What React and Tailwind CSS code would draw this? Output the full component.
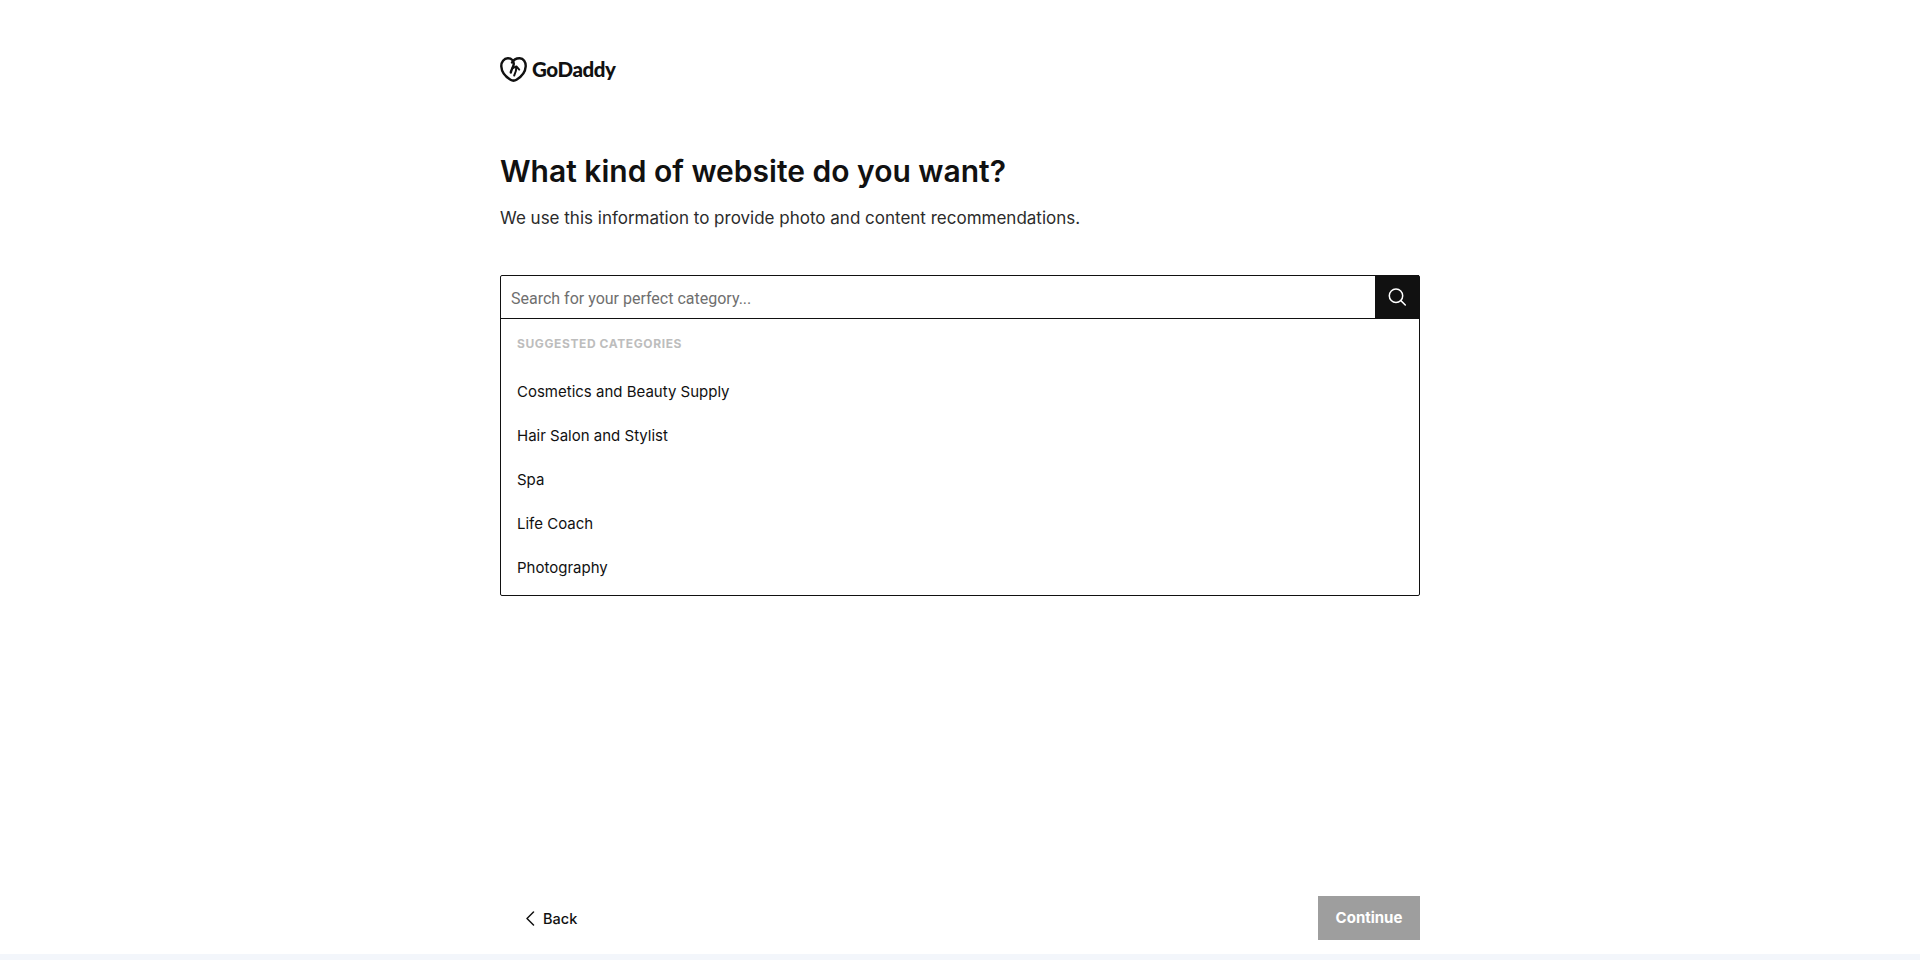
import React from "react";

const items = ["Cosmetics and Beauty Supply", "Hair Salon and Stylist", "Spa", "Life Coach", "Photography"];

function Heart() {
  return (
    <svg width="27" height="25" viewBox="0 0 27 25" fill="none" stroke="#111111" strokeWidth="2.4" strokeLinecap="round" strokeLinejoin="round" className="shrink-0">
      <path d="M13.5 23.6c-1 0-2-.3-3-.9C5.6 19.8 1.6 14.6 1.3 9.4 1.1 4.9 4 1.4 7.8 1.3c3.8-.1 6.4 2.7 5.9 6.2-.4 2.7-2.6 5.4-2.9 8" />
      <path d="M13.5 23.6c1 0 2-.3 3-.9 4.9-2.9 8.9-8.1 9.2-13.3.2-4.5-2.2-8-6-8.1-3.6-.1-6.2 1.5-7.7 4.2" />
      <path d="M14.2 18.5c1.4-2.8 2.2-5.8 2.2-8.8M12.2 11.4l4.2-2 2.8 3.2" strokeWidth="2" />
    </svg>
  );
}

export default function App() {
  return (
    <div className="h-[960px] flex flex-col bg-white text-[#111111] font-['Inter',sans-serif]">
      <main className="flex-1 w-[920px] mx-auto flex flex-col">
        <div className="h-[25px] mt-[57px] flex items-center gap-[5px]">
          <Heart />
          <span className="font-['Lato',sans-serif] font-black text-[20.5px] leading-none tracking-[-0.4px]">GoDaddy</span>
        </div>
        <h1 className="mt-[70px] text-[30px] leading-[38px] font-semibold">What kind of website do you want?</h1>
        <p className="mt-[16px] text-[17px] leading-6 text-[#2b2b2b]">We use this information to provide photo and content recommendations.</p>
        <div className="mt-[45px] border border-[#111111] rounded-[2px] h-[321px] flex flex-col">
          <div className="flex h-[43px] border-b border-[#111111] shrink-0">
            <div className="flex-1 flex items-center pl-[10px] text-[16px] text-[#6f6f6f] font-['Roboto',sans-serif] pt-[4px]">Search for your perfect category...</div>
            <div className="w-[44px] bg-[#111111] -my-px flex items-center justify-center">
              <svg width="20" height="20" viewBox="0 0 20 20" fill="none" stroke="white" strokeWidth="1.5" strokeLinecap="round">
                <circle cx="9" cy="8.7" r="6.7" />
                <path d="M13.9 13.6l4.4 4.4" />
              </svg>
            </div>
          </div>
          <div className="px-[16px] pt-[17px] text-[12px] leading-4 font-bold tracking-[0.6px] text-[#bdbdbd]">SUGGESTED CATEGORIES</div>
          <ul className="mt-[18px] pl-[16px]">
            {items.map((t) => (
              <li key={t} className="h-[44px] flex items-center text-[15px]">{t}</li>
            ))}
          </ul>
        </div>
        <div className="mt-auto mb-[14px] h-[44px] flex items-center justify-between">
          <div className="flex items-center pl-[26px] gap-[8px] text-[14.5px] font-medium pt-px">
            <svg width="9" height="15" viewBox="0 0 9 15" fill="none" stroke="#111111" strokeWidth="1.5" strokeLinecap="round" strokeLinejoin="round">
              <path d="M7.5 1L1 7.5 7.5 14" />
            </svg>
            <span>Back</span>
          </div>
          <button className="w-[102px] h-[44px] bg-[#9e9e9e] text-white text-[15px] font-bold">Continue</button>
        </div>
      </main>
      <div className="h-[6px] bg-[#f3f6fb]" />
    </div>
  );
}
